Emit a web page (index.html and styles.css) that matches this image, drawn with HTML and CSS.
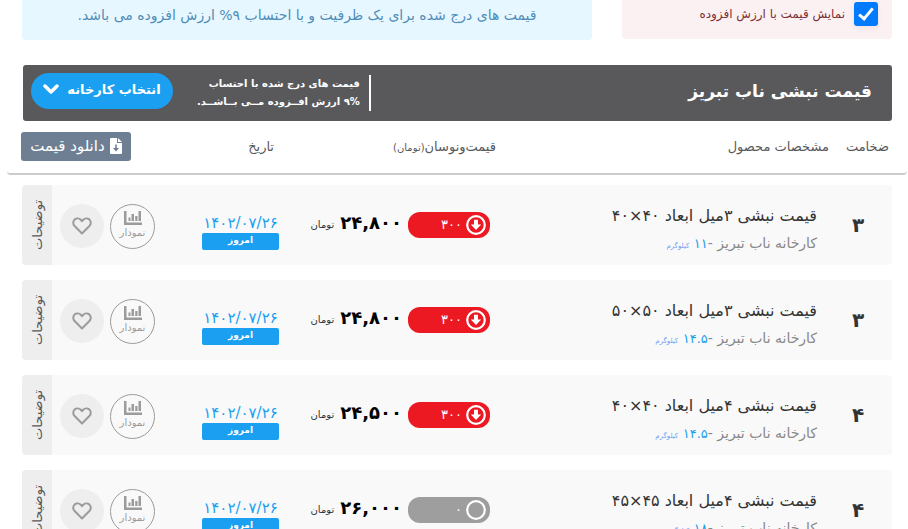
FILE: index.html
```
<!DOCTYPE html>
<html lang="fa" dir="rtl">

<head>
    <meta charset="UTF-8">
    <meta name="viewport" content="width=device-width, initial-scale=1.0">
    <title>قیمت نبشی ناب تبریز</title>
    <link rel="stylesheet" href="styles.css">
</head>

<body>
    <!-- shared icons -->
    <svg class="sprite" aria-hidden="true">
        <symbol id="down" viewBox="0 0 20 20">
            <circle cx="10" cy="10" r="8.8" fill="none" stroke="#fff" stroke-width="2.2" />
            <path d="M8 4.800h4v4.700h3.200L10 15 4.800 9.500H8z" fill="#fff" />
        </symbol>
        <symbol id="ring" viewBox="0 0 20 20">
            <circle cx="10" cy="10" r="8.8" fill="none" stroke="#fff" stroke-width="2.2" />
        </symbol>
        <symbol id="chart" viewBox="0 0 18 14">
            <path d="M0 0h2.500v11.500H18V14H0z M4.500 6.500h2v3.500h-2z M7.500 3h2.500v7H7.500z M11.200 5h2.300v5h-2.300z M14.500 0H17v10h-2.500z" fill="currentColor" />
        </symbol>
        <symbol id="heart" viewBox="0 0 20 18">
            <path d="M10 16.500 2.600 9C.600 6.800.900 4 2.700 2.400 4.800.700 7.600 1.300 9 3l1 1.200L11 3c1.400-1.700 4.200-2.300 6.300-.6C19.100 4 19.400 6.800 17.400 9z" fill="none" stroke="currentColor" stroke-width="2" stroke-linejoin="round" />
        </symbol>
    </svg>

    <div class="container">
        <div class="notices">
            <label class="vat" for="vat">
                <input type="checkbox" id="vat" checked>
                نمایش قیمت با ارزش افزوده
            </label>
            <p class="info">قیمت های درج شده برای یک ظرفیت و با احتساب ۹% ارزش افزوده می باشد.</p>
        </div>

        <div class="title-bar">
            <h2>قیمت نبشی ناب تبریز</h2>
            <p class="title-note">قیمت های درج شده با احتساب<br>۹% ارزش افــزوده مــی بــاشــد.</p>
            <button type="button" class="factory">
                انتخاب کارخانه
                <svg width="16" height="11" viewBox="0 0 16 11"><path d="M2 2l6 6 6-6" fill="none" stroke="#fff" stroke-width="3.500" stroke-linecap="round" stroke-linejoin="round" /></svg>
            </button>
        </div>

        <table>
            <thead>
                <tr>
                    <th>ضخامت</th>
                    <th>مشخصات محصول</th>
                    <th>قیمت‌ونوسان<small>(تومان)</small></th>
                    <th>تاریخ</th>
                    <th>
                        <button type="button" class="download">
                            <svg width="12" height="16" viewBox="0 0 12 16"><path d="M1 0h6v5h5v10a1 1 0 0 1-1 1H1a1 1 0 0 1-1-1V1a1 1 0 0 1 1-1z M8 0l4 4H8z" fill="#fff" /><path d="M5.200 6.500h1.600V10H9l-3 3.500L3 10h2.200z" fill="#6e7f93" /></svg>
                            دانلود قیمت
                        </button>
                    </th>
                </tr>
            </thead>
            <tbody>
                <tr>
                    <td class="size">۳</td>
                    <td class="name">
                        <a href="#">قیمت نبشی ۳میل ابعاد ۴۰×۴۰</a>
                        <p>کارخانه ناب تبریز -<b>۱۱</b> <small>کیلوگرم</small></p>
                    </td>
                    <td class="price">
                        <span class="change down"><svg><use href="#down" /></svg>۳۰۰</span>
                        <strong>۲۴,۸۰۰</strong> <small>تومان</small>
                    </td>
                    <td class="date">۱۴۰۲/۰۷/۲۶<span>امروز</span></td>
                    <td class="actions">
                        <button type="button" class="chart"><svg><use href="#chart" /></svg>نمودار</button>
                        <button type="button" class="like" aria-label="علاقه‌مندی"><svg><use href="#heart" /></svg></button>
                    </td>
                    <td class="more"><button type="button">توضیحات</button></td>
                </tr>
                <tr>
                    <td class="size">۳</td>
                    <td class="name">
                        <a href="#">قیمت نبشی ۳میل ابعاد ۵۰×۵۰</a>
                        <p>کارخانه ناب تبریز -<b>۱۴.۵</b> <small>کیلوگرم</small></p>
                    </td>
                    <td class="price">
                        <span class="change down"><svg><use href="#down" /></svg>۳۰۰</span>
                        <strong>۲۴,۸۰۰</strong> <small>تومان</small>
                    </td>
                    <td class="date">۱۴۰۲/۰۷/۲۶<span>امروز</span></td>
                    <td class="actions">
                        <button type="button" class="chart"><svg><use href="#chart" /></svg>نمودار</button>
                        <button type="button" class="like" aria-label="علاقه‌مندی"><svg><use href="#heart" /></svg></button>
                    </td>
                    <td class="more"><button type="button">توضیحات</button></td>
                </tr>
                <tr>
                    <td class="size">۴</td>
                    <td class="name">
                        <a href="#">قیمت نبشی ۴میل ابعاد ۴۰×۴۰</a>
                        <p>کارخانه ناب تبریز -<b>۱۴.۵</b> <small>کیلوگرم</small></p>
                    </td>
                    <td class="price">
                        <span class="change down"><svg><use href="#down" /></svg>۳۰۰</span>
                        <strong>۲۴,۵۰۰</strong> <small>تومان</small>
                    </td>
                    <td class="date">۱۴۰۲/۰۷/۲۶<span>امروز</span></td>
                    <td class="actions">
                        <button type="button" class="chart"><svg><use href="#chart" /></svg>نمودار</button>
                        <button type="button" class="like" aria-label="علاقه‌مندی"><svg><use href="#heart" /></svg></button>
                    </td>
                    <td class="more"><button type="button">توضیحات</button></td>
                </tr>
                <tr>
                    <td class="size">۴</td>
                    <td class="name">
                        <a href="#">قیمت نبشی ۴میل ابعاد ۴۵×۴۵</a>
                        <p>کارخانه ناب تبریز -<b>۱۸</b> <small>کیلوگرم</small></p>
                    </td>
                    <td class="price">
                        <span class="change"><svg><use href="#ring" /></svg>۰</span>
                        <strong>۲۶,۰۰۰</strong> <small>تومان</small>
                    </td>
                    <td class="date">۱۴۰۲/۰۷/۲۶<span>امروز</span></td>
                    <td class="actions">
                        <button type="button" class="chart"><svg><use href="#chart" /></svg>نمودار</button>
                        <button type="button" class="like" aria-label="علاقه‌مندی"><svg><use href="#heart" /></svg></button>
                    </td>
                    <td class="more"><button type="button">توضیحات</button></td>
                </tr>
            </tbody>
        </table>
    </div>
</body>

</html>
```
FILE: styles.css
```
* {
    box-sizing: border-box;
}

body {
    margin: 0;
    padding: 0 1px 0 7px;
    background-color: #fff;
    color: #333;
    font-family: "DejaVu Sans", sans-serif;
    font-size: 14px;
}

button {
    padding: 0;
    border: 0;
    font-family: inherit;
    cursor: pointer;
}

h2,
p {
    margin: 0;
}

.sprite {
    display: none;
}

/* notices */
.notices {
    display: grid;
    grid-template-columns: 270fr 570fr;
    align-items: start;
    gap: 30px;
    padding: 0 15px;
}

.vat {
    display: flex;
    align-items: center;
    gap: 9px;
    height: 39px;
    padding: 0 14px 11px;
    border-radius: 0 0 4px 4px;
    background-color: #fbf0f2;
    color: #7d3038;
    font-size: 12px;
    white-space: nowrap;
}

.vat input {
    appearance: none;
    width: 24px;
    height: 24px;
    margin: 0;
    border-radius: 3px;
    background-color: #007bff;
    box-shadow: 0 2px 6px #0001;
}

.vat input:checked::before {
    content: "";
    display: block;
    width: 5px;
    height: 12px;
    margin: 3px 8px;
    border: solid #fff;
    border-width: 0 3px 3px 0;
    transform: rotate(40deg);
}

.info {
    height: 40px;
    border-radius: 0 0 4px 4px;
    background-color: #e7f7ff;
    color: #4f8db8;
    font-size: 14px;
    line-height: 30px;
    text-align: center;
    white-space: nowrap;
}

/* title */
.title-bar {
    display: flex;
    align-items: center;
    height: 56px;
    margin: 25px 15px 0 16px;
    padding: 0 20px 0 8px;
    border-radius: 3px;
    background-color: #59595b;
    color: #fff;
}

.title-bar h2 {
    flex: 1;
    padding-bottom: 4px;
    font-size: 17px;
}

.title-note {
    margin-left: 24px;
    padding-right: 9px;
    border-right: 2px solid #fff;
    font-size: 10px;
    font-weight: bold;
    line-height: 18px;
    white-space: nowrap;
}

.factory {
    display: flex;
    align-items: center;
    justify-content: center;
    gap: 8px;
    width: 142px;
    height: 36px;
    margin-bottom: 4px;
    padding-bottom: 4px;
    border-radius: 18px;
    background-color: #1a9ff1;
    color: #fff;
    font-size: 13px;
    font-weight: bold;
}

/* price table */
table,
thead,
tbody {
    display: block;
}

tr {
    display: grid;
}

thead tr {
    grid-template-columns: 60px 1fr 222px 143px 110px;
    align-items: center;
    height: 54px;
    padding: 0 18px 2px 14px;
    border-bottom: 2px solid #ccc;
    border-radius: 4px;
}

th {
    padding: 0;
    color: #58595b;
    font-size: 13px;
    font-weight: normal;
    text-align: start;
    white-space: nowrap;
}

th small {
    font-size: 10px;
}

.download {
    display: flex;
    align-items: center;
    justify-content: center;
    gap: 5px;
    width: 110px;
    height: 29px;
    border-radius: 3px;
    background-color: #6e7f93;
    color: #fff;
    font-size: 15px;
}

tbody {
    padding: 10px 15px 0;
}

tbody tr {
    grid-template-columns: 68px 1fr 200px 88px 150px 30px;
    height: 80px;
    margin-bottom: 15px;
    border-radius: 4px;
    background-color: #f9f9f9;
    overflow: hidden;
}

td {
    padding: 0;
    white-space: nowrap;
}

.size {
    align-self: center;
    padding-bottom: 4px;
    font-size: 20px;
    font-weight: bold;
    text-align: center;
}

.name {
    padding: 17px 7px 0 0;
}

.name a {
    display: block;
    color: #333;
    font-size: 16px;
    line-height: 28px;
    text-decoration: none;
}

.name p {
    color: #888;
    font-size: 14px;
    line-height: 26px;
}

.name b {
    color: #1a9ff1;
    font-size: 13px;
    font-weight: normal;
}

.name small {
    color: #6c9cf5;
    font-size: 7px;
}

.price {
    display: flex;
    align-items: center;
    gap: 6px;
    padding-bottom: 4px;
}

.price strong {
    padding-bottom: 4px;
    color: #000;
    font-size: 18px;
}

.price small {
    font-size: 10px;
}

.change {
    display: flex;
    align-items: center;
    gap: 4px;
    width: 82px;
    height: 26px;
    padding: 0 4px;
    border-radius: 12px;
    background-color: #9e9e9e;
    color: #fff;
    font-size: 13px;
}

.change.down {
    background-color: #ec1822;
}

.change svg {
    width: 20px;
    height: 20px;
}

.date {
    padding: 29px 11px 0 0;
    color: #1a9ff1;
    font-size: 15px;
    line-height: 19px;
    text-align: center;
}

.date span {
    display: block;
    height: 17px;
    border-radius: 2px;
    background-color: #1a9ff1;
    color: #fff;
    font-size: 9px;
    font-weight: bold;
    line-height: 14px;
}

.actions {
    display: flex;
    align-items: center;
    justify-content: flex-end;
    gap: 6px;
    padding: 0 0 1px 8px;
}

.chart,
.like {
    display: flex;
    flex-direction: column;
    align-items: center;
    justify-content: center;
    width: 45px;
    height: 45px;
    border-radius: 50%;
    color: #9b9b9b;
    font-size: 10px;
    line-height: 16px;
}

.chart {
    border: 1px solid #9b9b9b;
    background-color: transparent;
}

.chart svg {
    width: 18px;
    height: 14px;
}

.like {
    width: 44px;
    height: 44px;
    background-color: #eee;
}

.like svg {
    width: 20px;
    height: 18px;
}

.more button {
    width: 30px;
    height: 80px;
    background-color: #eee;
    color: #58595b;
    font-size: 13px;
    writing-mode: sideways-lr;
}
```
